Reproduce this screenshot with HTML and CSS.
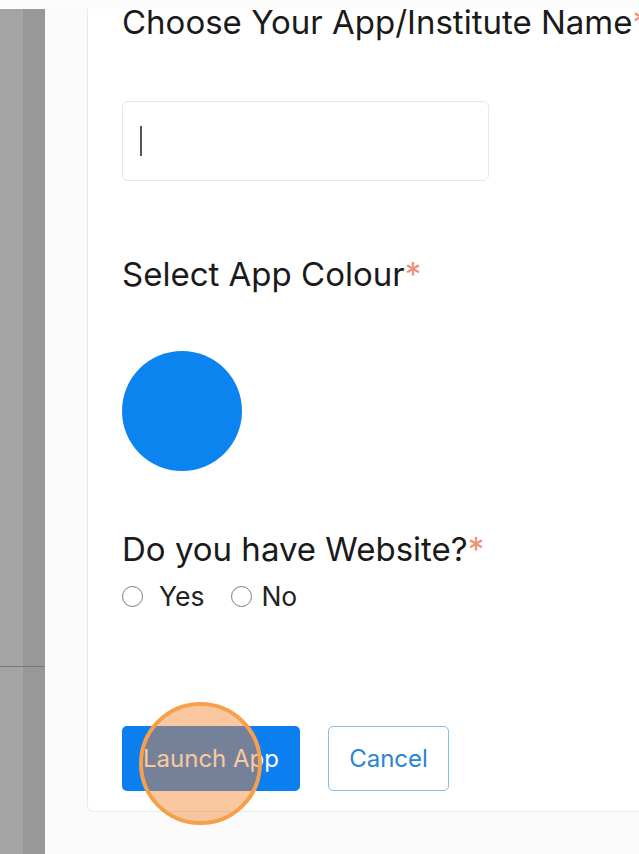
FILE: index.html
```html
<!DOCTYPE html>
<html>
<head>
<meta charset="utf-8">
<link rel="stylesheet" href="styles.css">
</head>
<body>
<div class="topstrip"></div>
<div class="main">
  <aside class="sidebar">
    <div class="sidebar-top"></div>
    <div class="sidebar-bottom"></div>
  </aside>
  <div class="content">
    <form class="card">
      <h2 class="label first">Choose Your App/Institute Name<span class="req">*</span></h2>
      <div class="input"><span class="caret"></span></div>
      <h2 class="label second">Select App Colour<span class="req">*</span></h2>
      <div class="swatch"></div>
      <h2 class="label third">Do you have Website?<span class="req">*</span></h2>
      <div class="radios">
        <label class="radio"><span class="ring"></span><span class="rtext yes">Yes</span></label>
        <label class="radio"><span class="ring"></span><span class="rtext">No</span></label>
      </div>
      <div class="actions">
        <button type="button" class="btn primary">Launch App<span class="click"></span></button>
        <button type="button" class="btn outline">Cancel</button>
      </div>
    </form>
  </div>
</div>
</body>
</html>
```
FILE: styles.css
```css
* { box-sizing: border-box; }
html, body { margin: 0; padding: 0; }
body {
  width: 639px;
  height: 854px;
  overflow: hidden;
  background: #fbfbfb;
  font-family: Inter, "Liberation Sans", sans-serif;
  color: #1a1a1a;
}
.topstrip { height: 9px; background: #fcfcfc; }
.main { display: flex; height: 845px; }
.sidebar {
  width: 45px;
  flex: none;
  display: flex;
  flex-direction: column;
  background: linear-gradient(to right, #a4a4a4 0, #a4a4a4 23px, #989898 23px, #989898 45px);
}
.sidebar-top { height: 658px; border-bottom: 1px solid #787878; }
.sidebar-bottom { flex: 1; }
.content { flex: 1; padding-left: 42px; }
.card {
  display: flow-root;
  width: 600px;
  height: 803px;
  background: #fff;
  border: 1px solid #e9e9e9;
  border-top: none;
  border-radius: 0 0 0 7px;
  padding-left: 34px;
}
.label {
  margin: 0;
  font-weight: 400;
  font-size: 33px;
  line-height: 40px;
  white-space: nowrap;
}
.req { color: #f0907a; }
.first { margin-top: -7px; }
.input {
  margin-top: 59px;
  width: 367px;
  height: 80px;
  border: 1.5px solid #e6e6e6;
  border-radius: 6px;
  display: flex;
  align-items: center;
  padding-left: 17px;
}
.caret { width: 2px; height: 30px; background: #555; }
.second { margin-top: 73px; }
.swatch {
  margin-top: 57px;
  width: 120px;
  height: 120px;
  border-radius: 50%;
  background: #0c84ef;
}
.third { margin-top: 58px; }
.radios { display: flex; align-items: center; margin-top: 12px; height: 30px; }
.radio { display: flex; align-items: center; font-size: 26.5px; color: #222; }
.radio + .radio { margin-left: 27px; }
.ring {
  width: 21px;
  height: 21px;
  border: 1.5px solid #7a7a7a;
  border-radius: 50%;
  background: #fff;
}
.rtext { margin-left: 9px; }
.rtext.yes { margin-left: 16px; }
.actions { display: flex; margin-top: 115px; }
.btn {
  height: 65px;
  border-radius: 5px;
  font-family: Inter, "Liberation Sans", sans-serif;
  font-size: 24px;
  padding: 0;
}
.primary {
  position: relative;
  width: 178px;
  background: #0b7ff0;
  border: none;
  color: #fff;
}
.outline {
  margin-left: 28px;
  width: 121px;
  background: #fff;
  border: 1.5px solid #82c0ec;
  color: #2a85d4;
}
.click {
  position: absolute;
  left: 17px;
  top: -24px;
  width: 123px;
  height: 123px;
  border-radius: 50%;
  border: 4px solid #f6a04c;
  background: rgba(245, 133, 44, 0.45);
}
```
